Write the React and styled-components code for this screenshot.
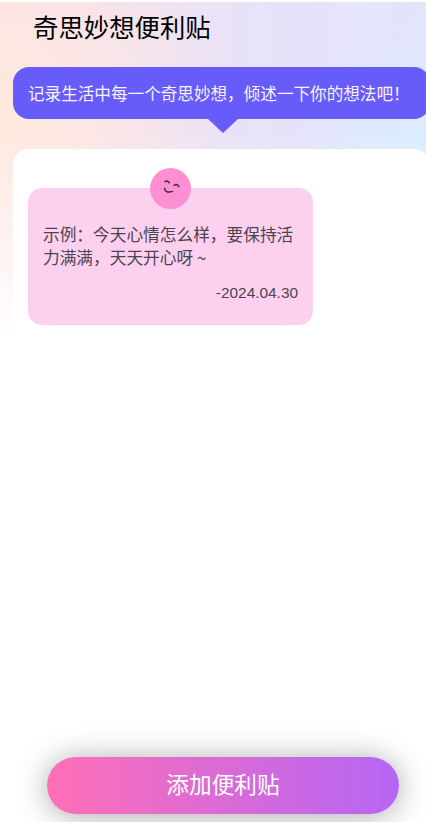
import React from "react";
import styled, { createGlobalStyle } from "styled-components";

const GlobalStyle = createGlobalStyle`
  html, body {
    margin: 0;
    padding: 0;
    background: #ffffff;
  }
  * {
    box-sizing: border-box;
  }
`;

const Page = styled.div`
  position: relative;
  display: flex;
  flex-direction: column;
  width: 426px;
  height: 822px;
  padding-top: 2px;
  overflow: hidden;
  font-family: "Noto Sans CJK SC", "Liberation Sans", sans-serif;
  background: #ffffff;
`;

const Header = styled.div`
  display: flex;
  flex-direction: column;
  flex: 1;
  background:
    linear-gradient(to bottom, rgba(255, 255, 255, 0) 0, rgba(255, 255, 255, 0) 130px, #ffffff 338px) no-repeat,
    radial-gradient(circle at 0 130px, #feeadf 0, rgba(254, 234, 223, 0) 220px) no-repeat,
    radial-gradient(circle at 426px 150px, #d9eefd 0, rgba(217, 238, 253, 0) 135px) no-repeat,
    linear-gradient(90deg, #fde0e6 0, #e7e3f9 62%, #e3e5fb 100%) no-repeat;
  background-size: 100% 340px;
`;

const Title = styled.h1`
  margin: 6px 0 0 33px;
  height: 36px;
  color: #000000;
  font-size: 25.4px;
  font-weight: 400;
  line-height: 36px;
`;

const Bubble = styled.div`
  position: relative;
  display: flex;
  align-items: center;
  height: 52px;
  margin: 23px -4px 0 13px;
  padding-left: 15px;
  border-radius: 16px;
  background: #675bfa;
  color: #f6f4ff;
  font-size: 16.6px;
  font-weight: 400;
  white-space: nowrap;

  &::after {
    content: "";
    position: absolute;
    left: 195px;
    bottom: -14px;
    border-style: solid;
    border-width: 14px 15px 0;
    border-color: #675bfa transparent transparent;
  }
`;

const Board = styled.div`
  display: flex;
  flex-direction: column;
  flex: 1;
  margin: 30px -4px 0 13px;
  padding: 39px 0 8px 15px;
  border-radius: 16px 16px 0 0;
  background: #ffffff;
`;

const Note = styled.div`
  position: relative;
  width: 285px;
  height: 137px;
  padding: 35px 15px 0;
  border-radius: 14px;
  background: #fed0f0;
  color: #4a464e;
`;

const Face = styled.div`
  position: absolute;
  top: -20px;
  left: 122px;
  width: 41px;
  height: 41px;
  border-radius: 50%;
  background: #fe8fd2;
`;

const NoteText = styled.p`
  margin: 0;
  font-size: 16.7px;
  font-weight: 400;
  line-height: 22.5px;
`;

const NoteDate = styled.p`
  margin: 15px 0 0;
  font-family: "Liberation Sans", sans-serif;
  font-size: 15.4px;
  line-height: 20px;
  text-align: right;
`;

const AddButton = styled.button`
  display: block;
  width: 352px;
  height: 57px;
  margin: auto 0 0 19px;
  padding: 0 0 4px;
  border: 0;
  border-radius: 29px;
  background: linear-gradient(to right, #ff6fb7, #b566f5);
  box-shadow: 0 2px 30px rgba(0, 0, 0, 0.34);
  color: #ffffff;
  font-family: inherit;
  font-size: 22.7px;
  font-weight: 400;
`;

const SmileFace = () => (
  <svg width="41" height="41" viewBox="0 0 41 41" fill="none" stroke="#3a2a3a" strokeWidth="1.5" strokeLinecap="round">
    <path d="M15 13.6Q17 11.8 19.4 14.8" />
    <path d="M24.2 17.2Q26.5 15.2 28.8 18.6" />
    <path d="M14.6 20.5Q15.2 25.6 22.6 23.4" />
  </svg>
);

const App = () => {
  return (
    <Page>
      <GlobalStyle />
      <Header>
        <Title>奇思妙想便利贴</Title>
        <Bubble>记录生活中每一个奇思妙想，倾述一下你的想法吧！</Bubble>
        <Board>
          <Note>
            <Face>
              <SmileFace />
            </Face>
            <NoteText>示例：今天心情怎么样，要保持活力满满，天天开心呀 ~</NoteText>
            <NoteDate>-2024.04.30</NoteDate>
          </Note>
          <AddButton>添加便利贴</AddButton>
        </Board>
      </Header>
    </Page>
  );
};

export default App;
